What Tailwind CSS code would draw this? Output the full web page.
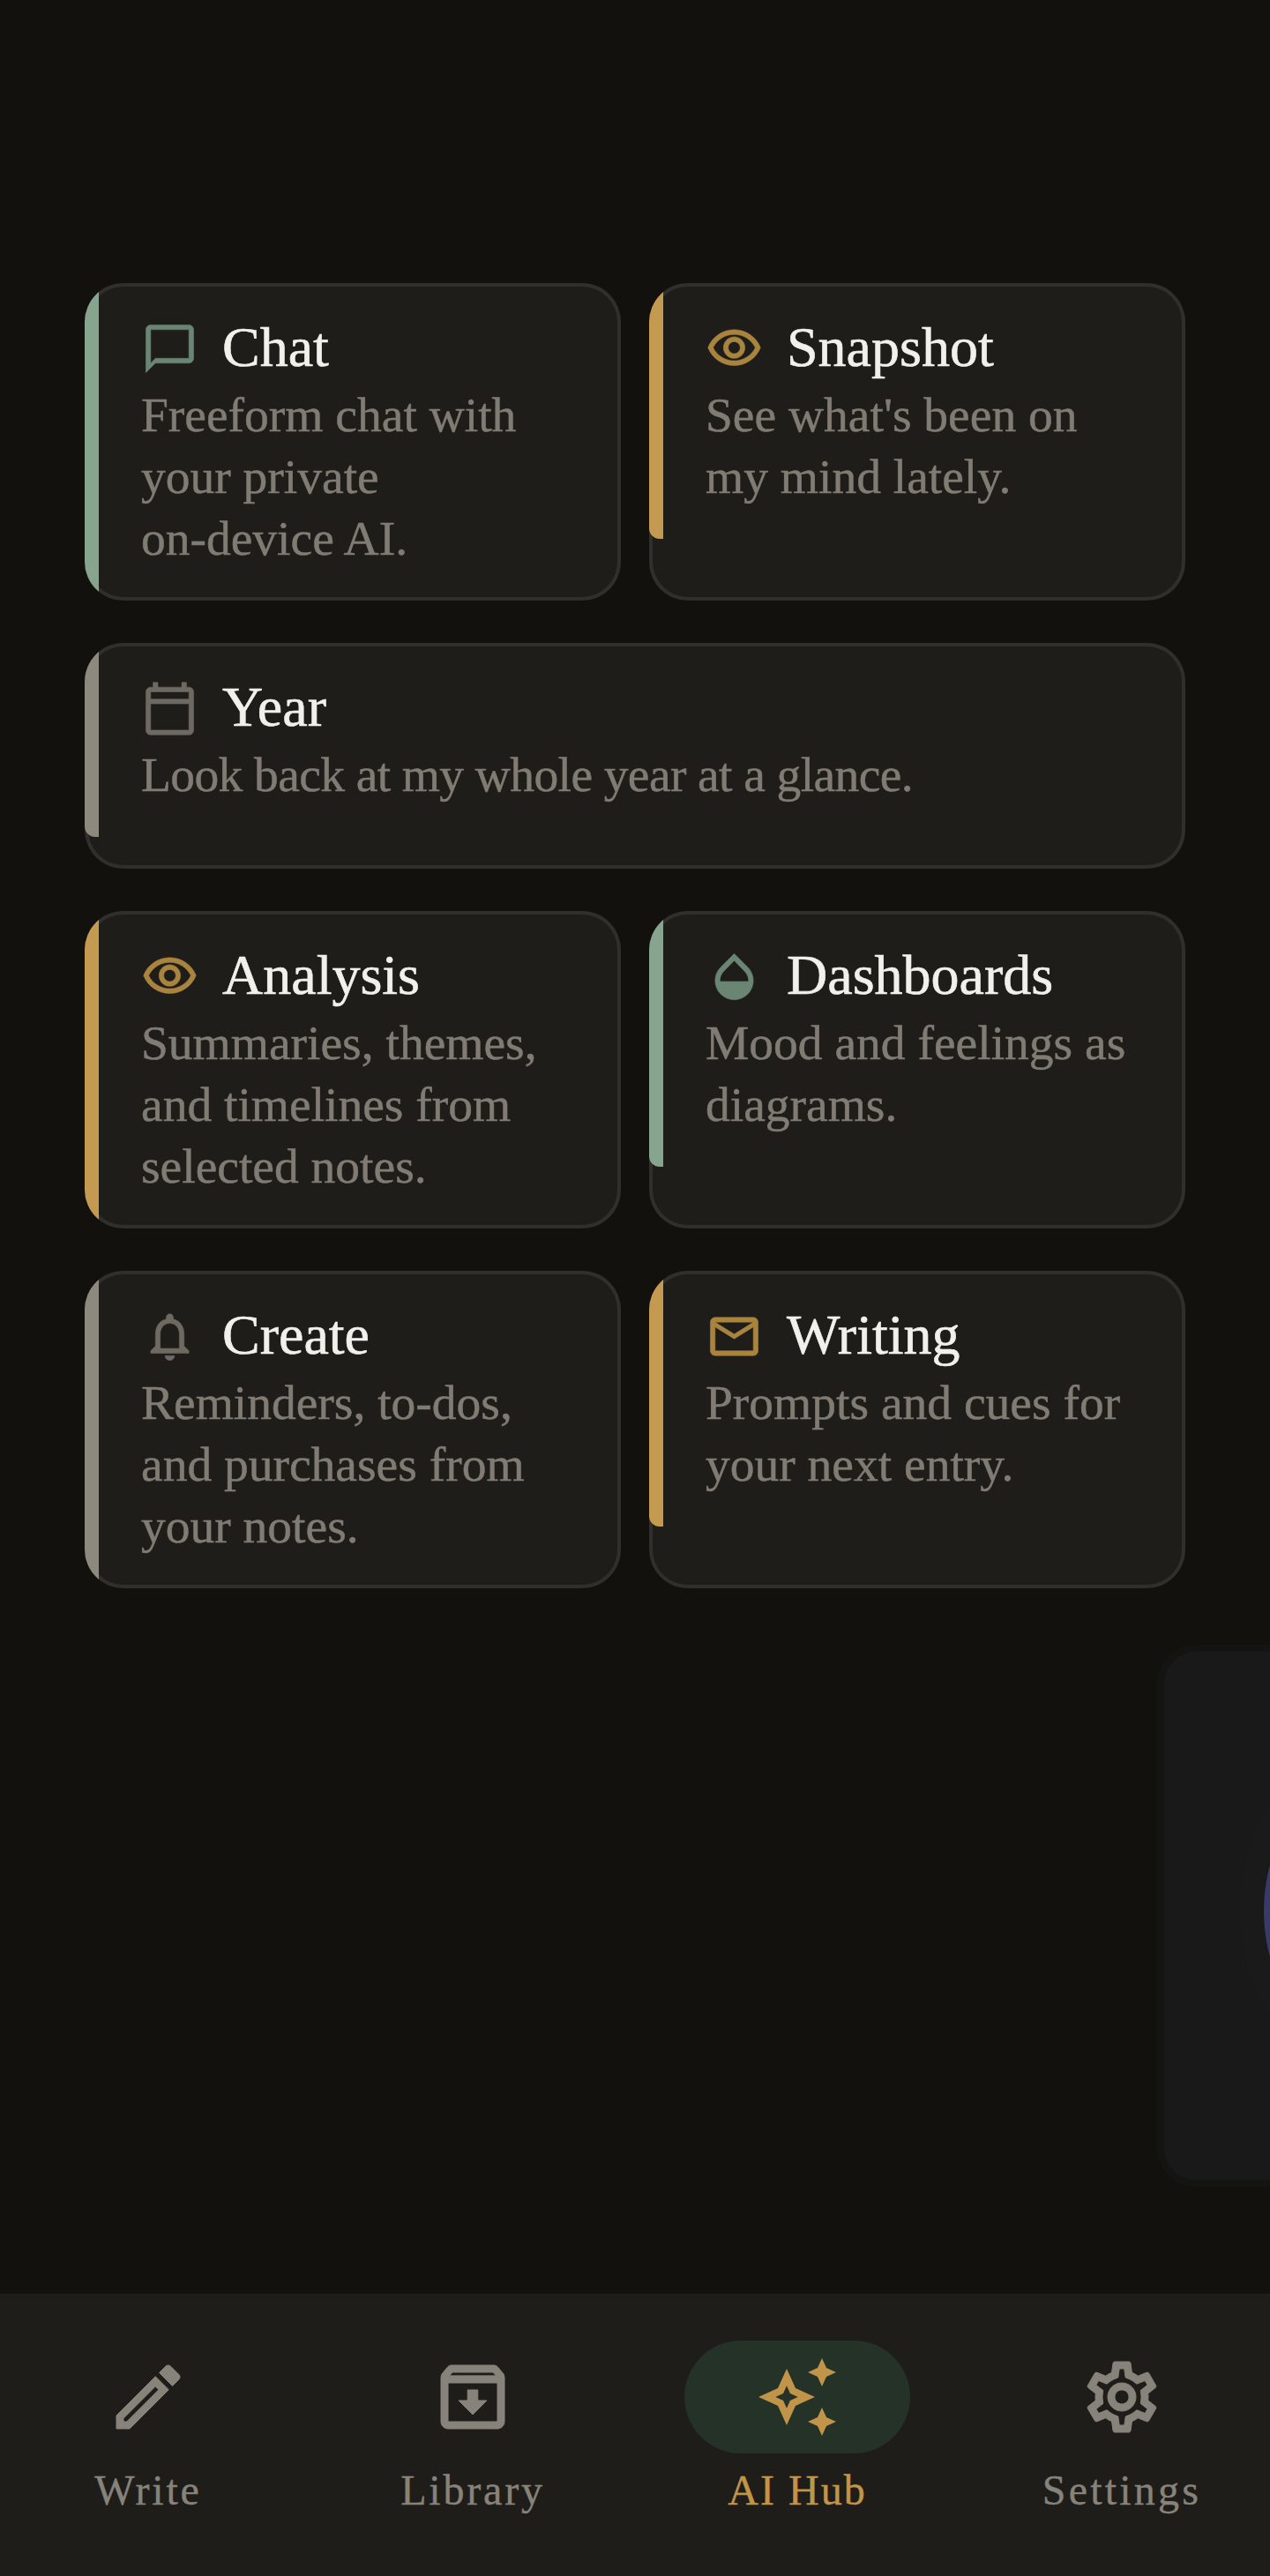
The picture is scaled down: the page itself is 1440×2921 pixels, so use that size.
<!DOCTYPE html>
<html lang="en">
<head>
  <meta charset="UTF-8" />
  <meta name="viewport" content="width=device-width, initial-scale=1.0"/>
  <title>AI Hub</title>
  <script src="https://cdn.jsdelivr.net/npm/@tailwindcss/browser@4"></script>
</head>
<body class="bg-[#12110e] overflow-hidden">
  <div class="flex flex-col w-[1440px] h-[2921px] overflow-hidden font-['Liberation_Serif',serif]">
    <main class="flex-1 overflow-hidden">
      <!-- Tool cards -->
      <div class="grid grid-cols-2 gap-x-8 gap-y-12 px-24 pt-[321px]">

        <div class="h-[360px] rounded-[44px] overflow-hidden bg-[#1e1d19] shadow-[inset_0_0_0_4px_#302f2b]">
          <div class="border-l-[16px] border-[#87a48f] rounded-bl-[12px] pt-9 pb-[35px] pl-12">
            <div class="flex items-center gap-[27px] h-[77px] mb-[2px]">
              <svg class="w-[65px] h-[65px] shrink-0 fill-[#6b8574] stroke-[#6b8574] stroke-[0.2]" viewBox="0 0 24 24"><path d="M20 2H4c-1.1 0-2 .9-2 2v18l4-4h14c1.1 0 2-.9 2-2V4c0-1.1-.9-2-2-2zm0 14H6l-2 2V4h16v12z"/></svg>
              <h2 class="pb-1 text-[64px] leading-[77px] text-[#f2f0ea] [-webkit-text-stroke:0.6px]">Chat</h2>
            </div>
            <p class="text-[55.5px] leading-[70px] text-[#807b73] whitespace-nowrap [-webkit-text-stroke:0.5px]">Freeform chat with<br>your private<br>on-device AI.</p>
          </div>
        </div>

        <div class="h-[360px] rounded-[44px] overflow-hidden bg-[#1e1d19] shadow-[inset_0_0_0_4px_#302f2b]">
          <div class="border-l-[16px] border-[#c49a50] rounded-bl-[12px] pt-9 pb-[35px] pl-12">
            <div class="flex items-center gap-[27px] h-[77px] mb-[2px]">
              <svg class="w-[65px] h-[65px] shrink-0 fill-[#a9843f] stroke-[#a9843f] stroke-[0.2]" viewBox="0 0 24 24"><path d="M12 6c3.79 0 7.17 2.13 8.82 5.5C19.17 14.87 15.79 17 12 17s-7.17-2.13-8.82-5.5C4.83 8.13 8.21 6 12 6m0-2C7 4 2.73 7.11 1 11.5 2.73 15.89 7 19 12 19s9.27-3.11 11-7.5C21.27 7.11 17 4 12 4zm0 5c1.38 0 2.5 1.12 2.5 2.5S13.38 14 12 14s-2.5-1.12-2.5-2.5S10.62 9 12 9m0-2c-2.48 0-4.5 2.02-4.5 4.5S9.52 16 12 16s4.5-2.02 4.5-4.5S14.48 7 12 7z"/></svg>
              <h2 class="pb-1 text-[64px] leading-[77px] text-[#f2f0ea] [-webkit-text-stroke:0.6px]">Snapshot</h2>
            </div>
            <p class="text-[55.5px] leading-[70px] text-[#807b73] whitespace-nowrap [-webkit-text-stroke:0.5px]">See what's been on<br>my mind lately.</p>
          </div>
        </div>

        <div class="col-span-2 h-[256px] rounded-[44px] overflow-hidden bg-[#1e1d19] shadow-[inset_0_0_0_4px_#302f2b]">
          <div class="border-l-[16px] border-[#8d897e] rounded-bl-[12px] pt-9 pb-[35px] pl-12">
            <div class="flex items-center gap-[27px] h-[77px] mb-[2px]">
              <svg class="w-[65px] h-[65px] shrink-0 fill-[#6e6a62] stroke-[#6e6a62] stroke-[0.2]" viewBox="0 0 24 24"><path d="M20 3h-1V1h-2v2H7V1H5v2H4c-1.1 0-2 .9-2 2v16c0 1.1.9 2 2 2h16c1.1 0 2-.9 2-2V5c0-1.1-.9-2-2-2zm0 2v3H4V5h16zM4 21V10h16v11H4z"/></svg>
              <h2 class="pb-1 text-[64px] leading-[77px] text-[#f2f0ea] [-webkit-text-stroke:0.6px]">Year</h2>
            </div>
            <p class="text-[55.5px] leading-[70px] tracking-[-0.6px] text-[#807b73] whitespace-nowrap [-webkit-text-stroke:0.5px]">Look back at my whole year at a glance.</p>
          </div>
        </div>

        <div class="h-[360px] rounded-[44px] overflow-hidden bg-[#1e1d19] shadow-[inset_0_0_0_4px_#302f2b]">
          <div class="border-l-[16px] border-[#c49a50] rounded-bl-[12px] pt-9 pb-[35px] pl-12">
            <div class="flex items-center gap-[27px] h-[77px] mb-[2px]">
              <svg class="w-[65px] h-[65px] shrink-0 fill-[#a9843f] stroke-[#a9843f] stroke-[0.2]" viewBox="0 0 24 24"><path d="M12 6c3.79 0 7.17 2.13 8.82 5.5C19.17 14.87 15.79 17 12 17s-7.17-2.13-8.82-5.5C4.83 8.13 8.21 6 12 6m0-2C7 4 2.73 7.11 1 11.5 2.73 15.89 7 19 12 19s9.27-3.11 11-7.5C21.27 7.11 17 4 12 4zm0 5c1.38 0 2.5 1.12 2.5 2.5S13.38 14 12 14s-2.5-1.12-2.5-2.5S10.62 9 12 9m0-2c-2.48 0-4.5 2.02-4.5 4.5S9.52 16 12 16s4.5-2.02 4.5-4.5S14.48 7 12 7z"/></svg>
              <h2 class="pb-1 text-[64px] leading-[77px] text-[#f2f0ea] [-webkit-text-stroke:0.6px]">Analysis</h2>
            </div>
            <p class="text-[55.5px] leading-[70px] text-[#807b73] whitespace-nowrap [-webkit-text-stroke:0.5px]">Summaries, themes,<br>and timelines from<br>selected notes.</p>
          </div>
        </div>

        <div class="h-[360px] rounded-[44px] overflow-hidden bg-[#1e1d19] shadow-[inset_0_0_0_4px_#302f2b]">
          <div class="border-l-[16px] border-[#87a48f] rounded-bl-[12px] pt-9 pb-[35px] pl-12">
            <div class="flex items-center gap-[27px] h-[77px] mb-[2px]">
              <svg class="w-[65px] h-[65px] shrink-0 fill-[#6b8574] stroke-[#6b8574] stroke-[0.2]" viewBox="0 0 24 24"><path d="M17.66 8L12 2.35 6.34 8C4.78 9.56 4 11.64 4 13.64s.78 4.11 2.34 5.67 3.61 2.35 5.66 2.35 4.1-.79 5.66-2.35S20 15.64 20 13.64 19.22 9.56 17.66 8zM6 14c.01-2 .62-3.27 1.76-4.4L12 5.27l4.24 4.38C17.38 10.77 17.99 12 18 14H6z"/></svg>
              <h2 class="pb-1 text-[64px] leading-[77px] text-[#f2f0ea] [-webkit-text-stroke:0.6px]">Dashboards</h2>
            </div>
            <p class="text-[55.5px] leading-[70px] text-[#807b73] whitespace-nowrap [-webkit-text-stroke:0.5px]">Mood and feelings as<br>diagrams.</p>
          </div>
        </div>

        <div class="h-[360px] rounded-[44px] overflow-hidden bg-[#1e1d19] shadow-[inset_0_0_0_4px_#302f2b]">
          <div class="border-l-[16px] border-[#8d897e] rounded-bl-[12px] pt-9 pb-[35px] pl-12">
            <div class="flex items-center gap-[27px] h-[77px] mb-[2px]">
              <svg class="w-[65px] h-[65px] shrink-0 fill-[#6e6a62] stroke-[#6e6a62] stroke-[0.2]" viewBox="0 0 24 24"><path d="M12 22c1.1 0 2-.9 2-2h-4c0 1.1.9 2 2 2zm6-6v-5c0-3.07-1.64-5.64-4.5-6.32V4c0-.83-.67-1.5-1.5-1.5s-1.5.67-1.5 1.5v.68C7.63 5.36 6 7.92 6 11v5l-2 2v1h16v-1l-2-2zm-2 1H8v-6c0-2.48 1.51-4.5 4-4.5s4 2.02 4 4.5v6z"/></svg>
              <h2 class="pb-1 text-[64px] leading-[77px] text-[#f2f0ea] [-webkit-text-stroke:0.6px]">Create</h2>
            </div>
            <p class="text-[55.5px] leading-[70px] text-[#807b73] whitespace-nowrap [-webkit-text-stroke:0.5px]">Reminders, to-dos,<br>and purchases from<br>your notes.</p>
          </div>
        </div>

        <div class="h-[360px] rounded-[44px] overflow-hidden bg-[#1e1d19] shadow-[inset_0_0_0_4px_#302f2b]">
          <div class="border-l-[16px] border-[#c49a50] rounded-bl-[12px] pt-9 pb-[35px] pl-12">
            <div class="flex items-center gap-[27px] h-[77px] mb-[2px]">
              <svg class="w-[65px] h-[65px] shrink-0 fill-[#a9843f] stroke-[#a9843f] stroke-[0.2]" viewBox="0 0 24 24"><path d="M20 4H4c-1.1 0-1.99.9-1.99 2L2 18c0 1.1.9 2 2 2h16c1.1 0 2-.9 2-2V6c0-1.1-.9-2-2-2zm0 14H4V8l8 5 8-5v10zm-8-7L4 6h16l-8 5z"/></svg>
              <h2 class="pb-1 text-[64px] leading-[77px] text-[#f2f0ea] [-webkit-text-stroke:0.6px]">Writing</h2>
            </div>
            <p class="text-[55.5px] leading-[70px] text-[#807b73] whitespace-nowrap [-webkit-text-stroke:0.5px]">Prompts and cues for<br>your next entry.</p>
          </div>
        </div>
      </div>

      <!-- Next carousel page peeking in from the right -->
      <div class="mt-16 ml-[1312px] w-[400px] h-[615px] flex items-center pb-[11px] rounded-[44px] bg-[#191919] border-8 border-[#141412] overflow-hidden">
        <div class="ml-[113px] w-[394px] h-[394px] shrink-0 rounded-full bg-[#383b68] shadow-[0_0_0_28px_#1a1a1a]"></div>
      </div>
    </main>

    <!-- Bottom navigation -->
    <nav class="h-[320px] bg-[#1e1d19] overflow-hidden">
      <div class="grid grid-cols-4 -mx-4 pt-[53px]">
        <a class="flex flex-col items-center text-[#87837a]">
          <span class="flex items-center justify-center h-32 w-64">
            <svg class="w-24 h-24 fill-current stroke-current stroke-[0.25]" viewBox="0 0 24 24"><path d="M14.06 9.02l.92.92L5.92 19H5v-.92l9.06-9.06M17.66 3c-.25 0-.51.1-.7.29l-1.83 1.83 3.75 3.75 1.83-1.83c.39-.39.39-1.02 0-1.41l-2.34-2.34c-.2-.2-.45-.29-.71-.29zm-3.6 3.19L3 17.25V21h3.75L17.81 9.94l-3.75-3.75z"/></svg>
          </span>
          <span class="mt-[14px] text-[48px] leading-[56px] tracking-[2.8px] [-webkit-text-stroke:0.4px]">Write</span>
        </a>
        <a class="flex flex-col items-center text-[#87837a]">
          <span class="flex items-center justify-center h-32 w-64">
            <svg class="w-24 h-24 fill-current stroke-current stroke-[0.25]" viewBox="0 0 24 24"><path d="M20.54 5.23l-1.39-1.68C18.88 3.21 18.47 3 18 3H6c-.47 0-.88.21-1.16.55L3.46 5.23C3.17 5.57 3 6.02 3 6.5V19c0 1.1.9 2 2 2h14c1.1 0 2-.9 2-2V6.5c0-.48-.17-.93-.46-1.27zM6.24 5h11.52l.81.97H5.44l.8-.97zM5 19V8h14v11H5zm8.45-9h-2.9v3H8l4 4 4-4h-2.55z"/></svg>
          </span>
          <span class="mt-[14px] text-[48px] leading-[56px] tracking-[2.8px] [-webkit-text-stroke:0.4px]">Library</span>
        </a>
        <a class="flex flex-col items-center text-[#c0954a]">
          <span class="flex items-center justify-center h-32 w-64 rounded-full bg-[#243228]">
            <svg class="w-24 h-24 fill-current" viewBox="0 0 24 24"><path d="M19 9l1.25-2.75L23 5l-2.75-1.25L19 1l-1.25 2.75L15 5l2.75 1.25L19 9zm-7.5.5L9 4 6.5 9.5 1 12l5.5 2.5L9 20l2.5-5.5L17 12l-5.5-2.5zM9.99 12.99L9 15.17l-.99-2.18L5.83 12l2.18-.99L9 8.83l.99 2.18 2.18.99-2.18.99zM19 15l-1.25 2.75L15 19l2.75 1.25L19 23l1.25-2.75L23 19l-2.75-1.25L19 15z"/></svg>
          </span>
          <span class="mt-[14px] text-[48px] leading-[56px] tracking-[2px] [-webkit-text-stroke:0.4px]">AI Hub</span>
        </a>
        <a class="flex flex-col items-center text-[#87837a]">
          <span class="flex items-center justify-center h-32 w-64">
            <svg class="w-24 h-24 fill-current stroke-current stroke-[0.25]" viewBox="0 0 24 24"><path d="M19.43 12.98c.04-.32.07-.64.07-.98 0-.34-.03-.66-.07-.98l2.11-1.65c.19-.15.24-.42.12-.64l-2-3.46c-.09-.16-.26-.25-.44-.25-.06 0-.12.01-.17.03l-2.49 1c-.52-.4-1.08-.73-1.69-.98l-.38-2.65C14.46 2.18 14.25 2 14 2h-4c-.25 0-.46.18-.49.42l-.38 2.65c-.61.25-1.17.59-1.69.98l-2.49-1c-.06-.02-.12-.03-.18-.03-.17 0-.34.09-.43.25l-2 3.46c-.13.22-.07.49.12.64l2.11 1.65c-.04.32-.07.65-.07.98 0 .33.03.66.07.98l-2.11 1.65c-.19.15-.24.42-.12.64l2 3.46c.09.16.26.25.44.25.06 0 .12-.01.17-.03l2.49-1c.52.4 1.08.73 1.69.98l.38 2.65c.03.24.24.42.49.42h4c.25 0 .46-.18.49-.42l.38-2.65c.61-.25 1.17-.59 1.69-.98l2.49 1c.06.02.12.03.18.03.17 0 .34-.09.43-.25l2-3.46c.12-.22.07-.49-.12-.64l-2.11-1.65zm-1.98-1.71c.04.31.05.52.05.73 0 .21-.02.43-.05.73l-.14 1.13.89.7 1.08.84-.7 1.21-1.27-.51-1.04-.42-.9.68c-.43.32-.84.56-1.25.73l-1.06.43-.16 1.13-.2 1.35h-1.4l-.19-1.35-.16-1.13-1.06-.43c-.43-.18-.83-.41-1.23-.71l-.91-.7-1.06.43-1.27.51-.7-1.21 1.08-.84.89-.7-.14-1.13c-.03-.31-.05-.54-.05-.74s.02-.43.05-.73l.14-1.13-.89-.7-1.08-.84.7-1.21 1.27.51 1.04.42.9-.68c.43-.32.84-.56 1.25-.73l1.06-.43.16-1.13.2-1.35h1.39l.19 1.35.16 1.13 1.06.43c.43.18.83.41 1.23.71l.91.7 1.06-.43 1.27-.51.7 1.21-1.07.85-.89.7.14 1.13zM12 8c-2.21 0-4 1.79-4 4s1.79 4 4 4 4-1.79 4-4-1.79-4-4-4zm0 6c-1.1 0-2-.9-2-2s.9-2 2-2 2 .9 2 2-.9 2-2 2z"/></svg>
          </span>
          <span class="mt-[14px] text-[48px] leading-[56px] tracking-[3.2px] [-webkit-text-stroke:0.4px]">Settings</span>
        </a>
      </div>
    </nav>
  </div>
</body>
</html>
